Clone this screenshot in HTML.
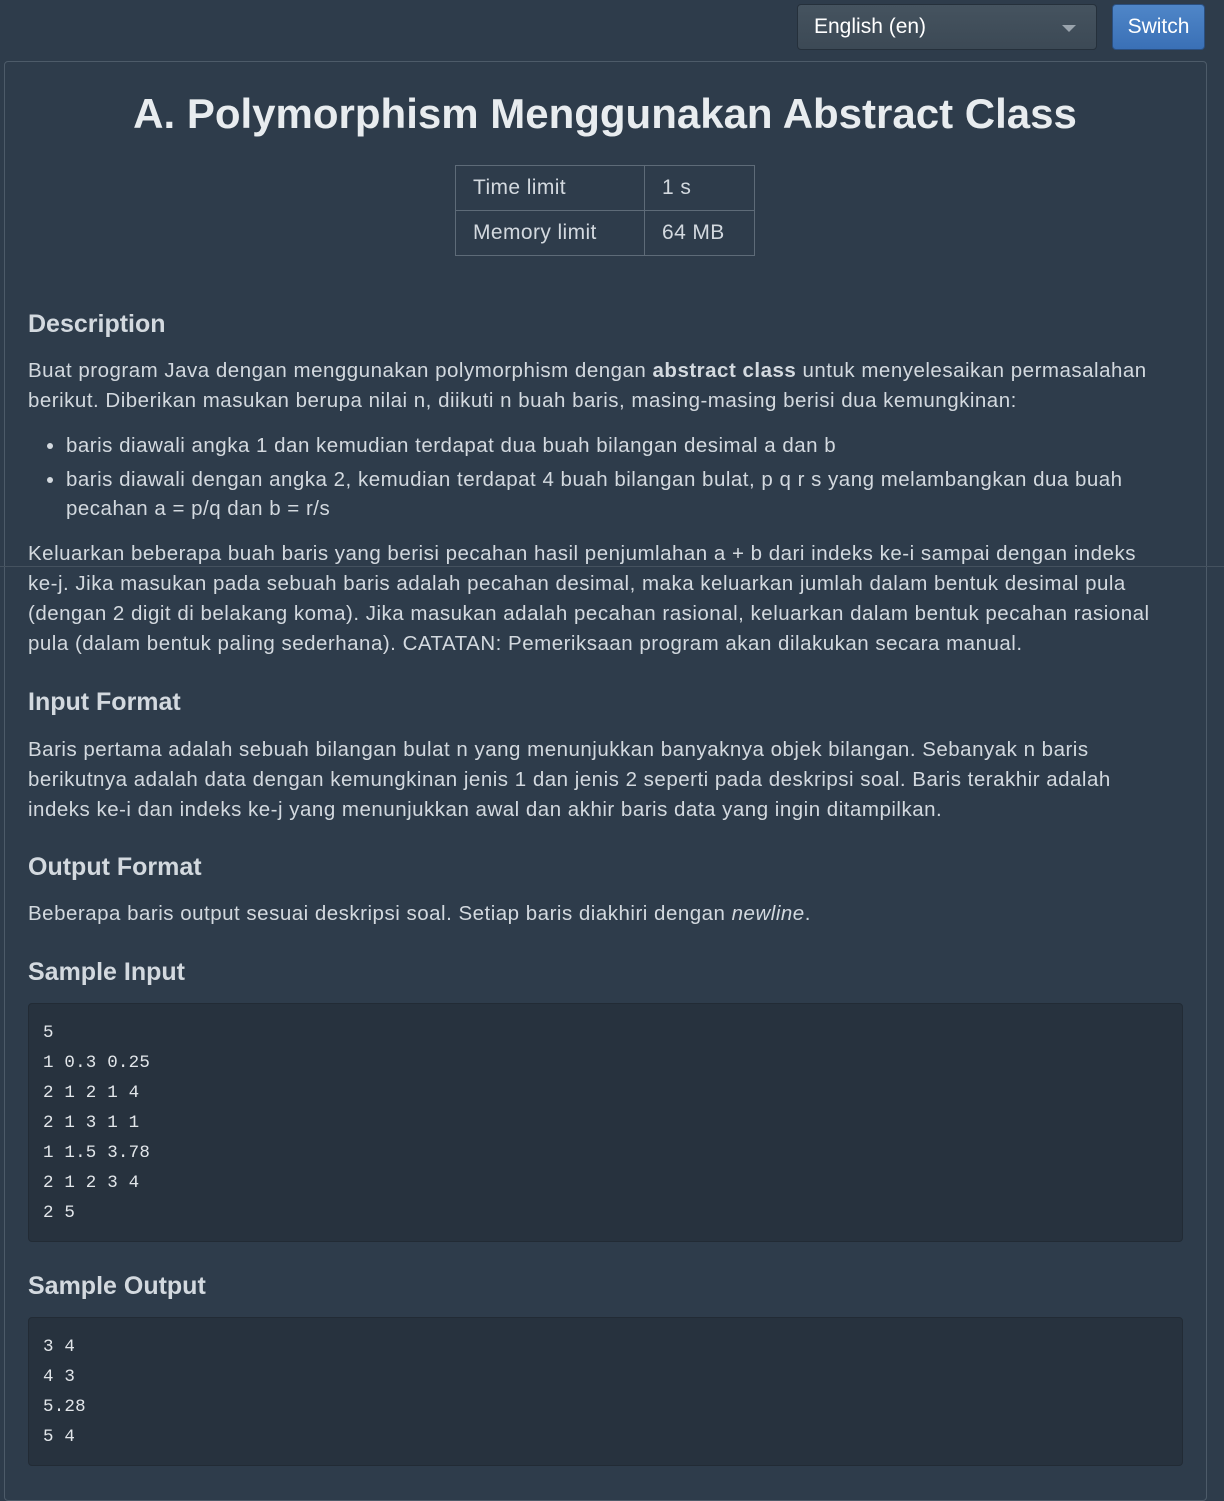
<!DOCTYPE html>
<html><head><meta charset="utf-8"><style>
body{margin:0;background:#2e3c4b;width:1224px;height:1488px;overflow:hidden;font-family:"Liberation Sans",sans-serif;color:#d3d9df;position:relative}
.sel{position:absolute;left:797px;top:4px;width:300px;height:46px;border:1px solid #25303b;border-radius:4px;background:linear-gradient(#45535f,#3c4955);box-sizing:border-box;color:#fff;font-size:21px;line-height:44px;padding-left:16px}
.sel:after{content:"";position:absolute;right:20px;top:20px;border:7px solid transparent;border-top:7px solid #9aa4ad}
.btn{position:absolute;left:1112px;top:4px;width:93px;height:46px;box-sizing:border-box;border:1px solid #2a4f80;border-radius:4px;background:linear-gradient(#4f86c8,#3a70b6);color:#fff;font-size:21px;text-align:center;line-height:44px}
.panel{position:absolute;left:4px;top:61px;width:1203px;height:1440px;border:1px solid #4d5b69;border-radius:4px;box-sizing:border-box}
h1{position:absolute;left:0;width:1210px;top:90px;margin:0;text-align:center;font-size:42px;font-weight:bold;color:#e8ecef}
table{position:absolute;left:455px;top:165px;border-collapse:collapse;font-size:21px;letter-spacing:0.4px}
td{border:1px solid #5e6b78;height:44px;padding:0 17px}
.h{position:absolute;left:28px;margin:0;font-size:25px;font-weight:bold;color:#d3d9df}
.p{position:absolute;left:28px;width:1190px;font-size:20.5px;line-height:30px;margin:0;letter-spacing:0.5px;white-space:nowrap}
ul{position:absolute;left:28px;margin:0;padding-left:38px;width:1150px;font-size:20.5px;line-height:29px;letter-spacing:0.5px;white-space:nowrap}
li{margin-bottom:5px}
pre{position:absolute;left:28px;width:1155px;box-sizing:border-box;margin:0;background:#27323e;border:1px solid #222b35;border-radius:4px;font-family:"Liberation Mono","DejaVu Sans Mono",monospace;font-size:17.5px;line-height:30px;padding:14px 14px;color:#e2e6ea;letter-spacing:0.2px}
.line{position:absolute;left:0;top:566px;width:1224px;height:1px;background:#45525f}
</style></head><body>
<div class="sel">English (en)</div><div class="btn">Switch</div>
<div class="panel"></div>
<h1>A. Polymorphism Menggunakan Abstract Class</h1>
<table><tr><td style="width:154px">Time limit</td><td style="width:75px">1 s</td></tr><tr><td>Memory limit</td><td>64 MB</td></tr></table>
<div class="h" style="top:310px">Description</div>
<p class="p" style="top:356px">Buat program Java dengan menggunakan polymorphism dengan <b>abstract class</b> untuk menyelesaikan permasalahan<br>berikut. Diberikan masukan berupa nilai n, diikuti n buah baris, masing-masing berisi dua kemungkinan:</p>
<ul style="top:431px"><li>baris diawali angka 1 dan kemudian terdapat dua buah bilangan desimal a dan b</li><li>baris diawali dengan angka 2, kemudian terdapat 4 buah bilangan bulat, p q r s yang melambangkan dua buah<br>pecahan a = p/q dan b = r/s</li></ul>
<div class="line"></div>
<p class="p" style="top:539px">Keluarkan beberapa buah baris yang berisi pecahan hasil penjumlahan a + b dari indeks ke-i sampai dengan indeks<br>ke-j. Jika masukan pada sebuah baris adalah pecahan desimal, maka keluarkan jumlah dalam bentuk desimal pula<br>(dengan 2 digit di belakang koma). Jika masukan adalah pecahan rasional, keluarkan dalam bentuk pecahan rasional<br>pula (dalam bentuk paling sederhana). CATATAN: Pemeriksaan program akan dilakukan secara manual.</p>
<div class="h" style="top:688px">Input Format</div>
<p class="p" style="top:735px">Baris pertama adalah sebuah bilangan bulat n yang menunjukkan banyaknya objek bilangan. Sebanyak n baris<br>berikutnya adalah data dengan kemungkinan jenis 1 dan jenis 2 seperti pada deskripsi soal. Baris terakhir adalah<br>indeks ke-i dan indeks ke-j yang menunjukkan awal dan akhir baris data yang ingin ditampilkan.</p>
<div class="h" style="top:853px">Output Format</div>
<p class="p" style="top:899px">Beberapa baris output sesuai deskripsi soal. Setiap baris diakhiri dengan <i>newline</i>.</p>
<div class="h" style="top:958px">Sample Input</div>
<pre style="top:1003px;height:239px">5
1 0.3 0.25
2 1 2 1 4
2 1 3 1 1
1 1.5 3.78
2 1 2 3 4
2 5</pre>
<div class="h" style="top:1272px">Sample Output</div>
<pre style="top:1317px;height:149px">3 4
4 3
5.28
5 4</pre>
</body></html>
